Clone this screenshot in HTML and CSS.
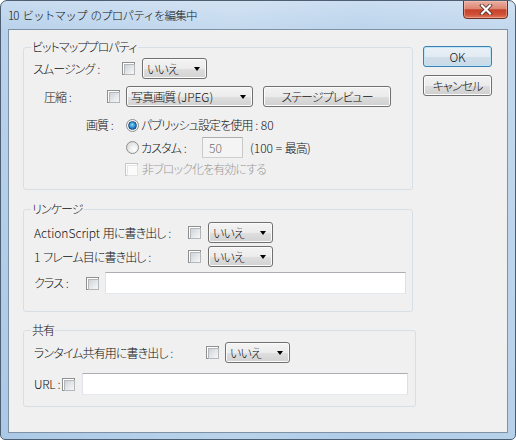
FILE: index.html
```html
<!DOCTYPE html>
<html lang="ja">
<head>
<meta charset="utf-8">
<link rel="stylesheet" href="styles.css">
</head>
<body>
<div class="window">
  <div class="titlebar">
    <div class="title">10 ビットマップ のプロパティを編集中</div>
    <div class="close">
      <svg width="14" height="11" viewBox="0 0 14 11">
        <path d="M3 1.5 L11 9.5 M11 1.5 L3 9.5" stroke="#4a2a24" stroke-width="3.8" stroke-linecap="square" fill="none"/>
        <path d="M3 1.5 L11 9.5 M11 1.5 L3 9.5" stroke="#ffffff" stroke-width="2.2" stroke-linecap="square" fill="none"/>
      </svg>
    </div>
  </div>
  <div class="client">
    <div class="main">
      <fieldset class="group g1">
        <legend>ビットマッププロパティ</legend>
        <div class="row r1">
          <span class="lbl">スムージング<span class="lat"> :</span></span>
          <span class="cb"></span>
          <span class="combo w65"><span class="v">いいえ</span><span class="arrow"></span></span>
        </div>
        <div class="row r2">
          <span class="lbl">圧縮<span class="lat"> :</span></span>
          <span class="cb"></span>
          <span class="combo w127"><span class="v">写真画質 <span class="lat">(JPEG)</span></span><span class="arrow"></span></span>
          <button class="btn preview">ステージプレビュー</button>
        </div>
        <div class="row r3">
          <span class="lbl">画質<span class="lat"> :</span></span>
          <span class="radio on"></span>
          <span class="rtext">パブリッシュ設定を使用<span class="lat"> : 80</span></span>
        </div>
        <div class="row r4">
          <span class="radio"></span>
          <span class="lbl">カスタム<span class="lat"> :</span></span>
          <span class="txt dis"><span class="lat">50</span></span>
          <span class="hint"><span class="lat">(100 = </span>最高<span class="lat">)</span></span>
        </div>
        <div class="row r5">
          <span class="cb dis"></span>
          <span class="distext">非ブロック化を有効にする</span>
        </div>
      </fieldset>

      <fieldset class="group g2">
        <legend>リンケージ</legend>
        <div class="row a1">
          <span class="lbl"><span class="lat">ActionScript </span>用に書き出し<span class="lat"> :</span></span>
          <span class="cb"></span>
          <span class="combo w65"><span class="v">いいえ</span><span class="arrow"></span></span>
        </div>
        <div class="row a2">
          <span class="lbl"><span class="lat">1 </span>フレーム目に書き出し<span class="lat"> :</span></span>
          <span class="cb"></span>
          <span class="combo w65"><span class="v">いいえ</span><span class="arrow"></span></span>
        </div>
        <div class="row a3">
          <span class="lbl">クラス<span class="lat"> :</span></span>
          <span class="cb"></span>
          <span class="txt w301"></span>
        </div>
      </fieldset>

      <fieldset class="group g3">
        <legend>共有</legend>
        <div class="row s1">
          <span class="lbl">ランタイム共有用に書き出し<span class="lat"> :</span></span>
          <span class="cb"></span>
          <span class="combo w65"><span class="v">いいえ</span><span class="arrow"></span></span>
        </div>
        <div class="row s2">
          <span class="lbl url">URL :</span>
          <span class="cb"></span>
          <span class="txt w326"></span>
        </div>
      </fieldset>
    </div>
    <div class="side">
      <button class="btn default"><span class="lat">OK</span></button>
      <button class="btn">キャンセル</button>
    </div>
  </div>
</div>
</body>
</html>
```

FILE: styles.css
```css
* { box-sizing: border-box; }

body {
  margin: 0;
  font-family: "Noto Sans CJK JP", "Noto Sans", sans-serif;
  font-size: 12px;
  font-weight: 300;
  letter-spacing: -0.9px;
  color: #111;
}

.lat { letter-spacing: 0; }

.window {
  width: 516px;
  height: 440px;
  border: 1px solid #4d5f71;
  border-radius: 7px 7px 5px 5px;
  background:
    linear-gradient(90deg, rgba(255,255,255,0) 0%, rgba(255,255,255,0.18) 45%, rgba(255,255,255,0.05) 70%, rgba(255,255,255,0.15) 100%),
    linear-gradient(180deg, #c8dcf0 0, #b9d2eb 28px, #abc9e7 100%);
  display: flex;
  flex-direction: column;
  padding: 0 7px 6px;
  overflow: hidden;
}

.titlebar {
  height: 28px;
  display: flex;
  justify-content: space-between;
  align-items: flex-start;
}

.title {
  margin-top: 6px;
  line-height: 16px;
  font-size: 11.5px;
  letter-spacing: -0.8px;
  word-spacing: 2px;
  white-space: nowrap;
}

.close {
  width: 45px;
  height: 19px;
  margin-top: -1px;
  border: 1px solid #6b3024;
  border-radius: 0 0 4px 4px;
  background: linear-gradient(180deg, #eab0a2 0%, #dd8672 45%, #c6412a 52%, #cf5238 80%, #e07a5e 100%);
  box-shadow: inset 0 0 0 1px rgba(255, 200, 190, 0.45);
  display: flex;
  align-items: center;
  justify-content: center;
}

.client {
  flex: 1;
  background: #f0f0f0;
  border: 1px solid #7e91a5;
  display: flex;
  align-items: flex-start;
}

.main {
  margin-left: 14px;
  width: 393px;
  padding-top: 10px;
}

.side {
  margin-left: 7px;
  padding-top: 16px;
  display: flex;
  flex-direction: column;
  gap: 8px;
}

fieldset.group {
  margin: 0;
  padding: 0 0 11px;
  border: 1px solid #d5dfe5;
  border-radius: 3px;
  min-width: 0;
  width: 390px;
}

.g2 { margin-top: 12px !important; padding-bottom: 17px !important; }
.g3 { margin-top: 11px !important; width: 393px !important; padding-bottom: 11px !important; }

legend {
  margin-left: 7px;
  padding: 0 1px;
  line-height: 14px;
  font-feature-settings: "palt";
}

.row {
  display: flex;
  align-items: center;
  height: 21px;
  white-space: nowrap;
}

.lbl, .rtext, .hint, .distext, .v, .btn {
  font-feature-settings: "palt";
  line-height: 14px;
}

.lbl { flex: none; }
.lbl.url { letter-spacing: -0.3px; }

/* checkbox */
.cb {
  flex: none;
  width: 13px;
  height: 13px;
  border: 1px solid #8e8f8f;
  background: #fff;
  padding: 1px;
}
.cb::before {
  content: "";
  display: block;
  width: 9px;
  height: 9px;
  border: 1px solid #b3b7bc;
  background: linear-gradient(135deg, #cfd3d8 0%, #e6e8ea 55%, #f7f7f7 100%);
}
.cb.dis { border-color: #c6c6c6; }
.cb.dis::before { border-color: #e4e4e4; background: #fbfbfb; }

/* radio */
.radio {
  flex: none;
  width: 13px;
  height: 13px;
  border-radius: 50%;
  border: 1px solid #8c8e90;
  background: radial-gradient(circle at 65% 65%, #ffffff 0%, #eeeeee 40%, #cfcfcf 100%);
  display: flex;
  align-items: center;
  justify-content: center;
}
.radio.on { background: radial-gradient(circle at 50% 50%, #ffffff 55%, #d8d8d8 100%); }
.radio.on::before {
  content: "";
  width: 7px;
  height: 7px;
  border-radius: 50%;
  border: 1px solid #1c4f7c;
  background: radial-gradient(circle at 45% 40%, #8fe0ff 0%, #2a8ad0 50%, #0e4f8d 100%);
}

/* combobox */
.combo {
  flex: none;
  display: flex;
  align-items: center;
  height: 21px;
  border: 1px solid #707070;
  border-radius: 3px;
  background: linear-gradient(180deg, #f4f4f4 0%, #ececec 50%, #dfdfdf 51%, #d2d2d2 100%);
  box-shadow: inset 0 0 0 1px #fbfbfb;
  padding: 0 6px 0 4px;
}
.combo .v { flex: 1; }
.arrow {
  width: 0;
  height: 0;
  border-left: 3.5px solid transparent;
  border-right: 3.5px solid transparent;
  border-top: 4px solid #000;
}
.w65 { width: 65px; }
.w127 { width: 127px; }

/* buttons */
.btn {
  flex: none;
  width: 69px;
  height: 21px;
  padding: 0;
  font-family: inherit;
  font-size: 12px;
  font-weight: 300;
  letter-spacing: -0.9px;
  color: #111;
  border: 1px solid #707070;
  border-radius: 3px;
  background: linear-gradient(180deg, #f2f2f2 0%, #ebebeb 50%, #dddddd 51%, #cfcfcf 100%);
  box-shadow: inset 0 0 0 1px #fcfcfc;
}
.btn.default {
  border-color: #3c7fb1;
  background: linear-gradient(180deg, #eaf1f7 0%, #e2ebf3 50%, #d2dfea 51%, #c9d9e7 100%);
  box-shadow: inset 0 0 0 1px #bfe6f8;
}
.btn.preview { width: 128px; margin-left: 10px; }

/* text inputs */
.txt {
  flex: none;
  height: 22px;
  background: #fff;
  border: 1px solid;
  border-color: #abadb3 #dbdfe6 #e3e9ef #e2e3ea;
  display: flex;
  align-items: center;
  padding-left: 6px;
}
.txt.dis {
  width: 41px;
  height: 21px;
  background: #f4f4f4;
  border-color: #adadad #c9c9c9 #cfcfcf #c9c9c9;
  color: #6d6d6d;
}
.w301 { width: 301px; }
.w326 { width: 326px; }

.distext { color: #9a9a9a; margin-left: 4px; }
.hint { margin-left: 7px; }

/* group 1 rows */
.r1 { margin-top: 4px; }
.r1 .lbl { margin-left: 9px; width: 89px; }
.r1 .combo { margin-left: 7px; }

.r2 { margin-top: 7px; }
.r2 .lbl { margin-left: 20px; width: 63px; }
.r2 .combo { margin-left: 6px; }

.r3 { margin-top: 8px; height: 20px; }
.r3 .lbl { margin-left: 62px; width: 40px; }
.r3 .rtext { margin-left: 2px; }

.r4 { margin-top: 2px; }
.r4 .radio { margin-left: 102px; }
.r4 .lbl { margin-left: 2px; width: 61px; }

.r5 { margin-top: 2px; height: 18px; }
.r5 .cb { margin-left: 101px; }

/* group 2 rows */
.a1 { margin-top: 6px; }
.a2 { margin-top: 3px; }
.a1 .lbl, .a2 .lbl { margin-left: 10px; width: 154px; }
.a1 .combo, .a2 .combo { margin-left: 7px; }

.a3 { margin-top: 5px; height: 22px; }
.a3 .lbl { margin-left: 10px; width: 52px; }
.a3 .txt { margin-left: 6px; }

/* group 3 rows */
.s1 { margin-top: 5px; }
.s1 .lbl { margin-left: 10px; width: 172px; }
.s1 .combo { margin-left: 6px; }

.s2 { margin-top: 10px; height: 22px; }
.s2 .lbl { margin-left: 10px; width: 28px; }
.s2 .txt { margin-left: 7px; }
```
